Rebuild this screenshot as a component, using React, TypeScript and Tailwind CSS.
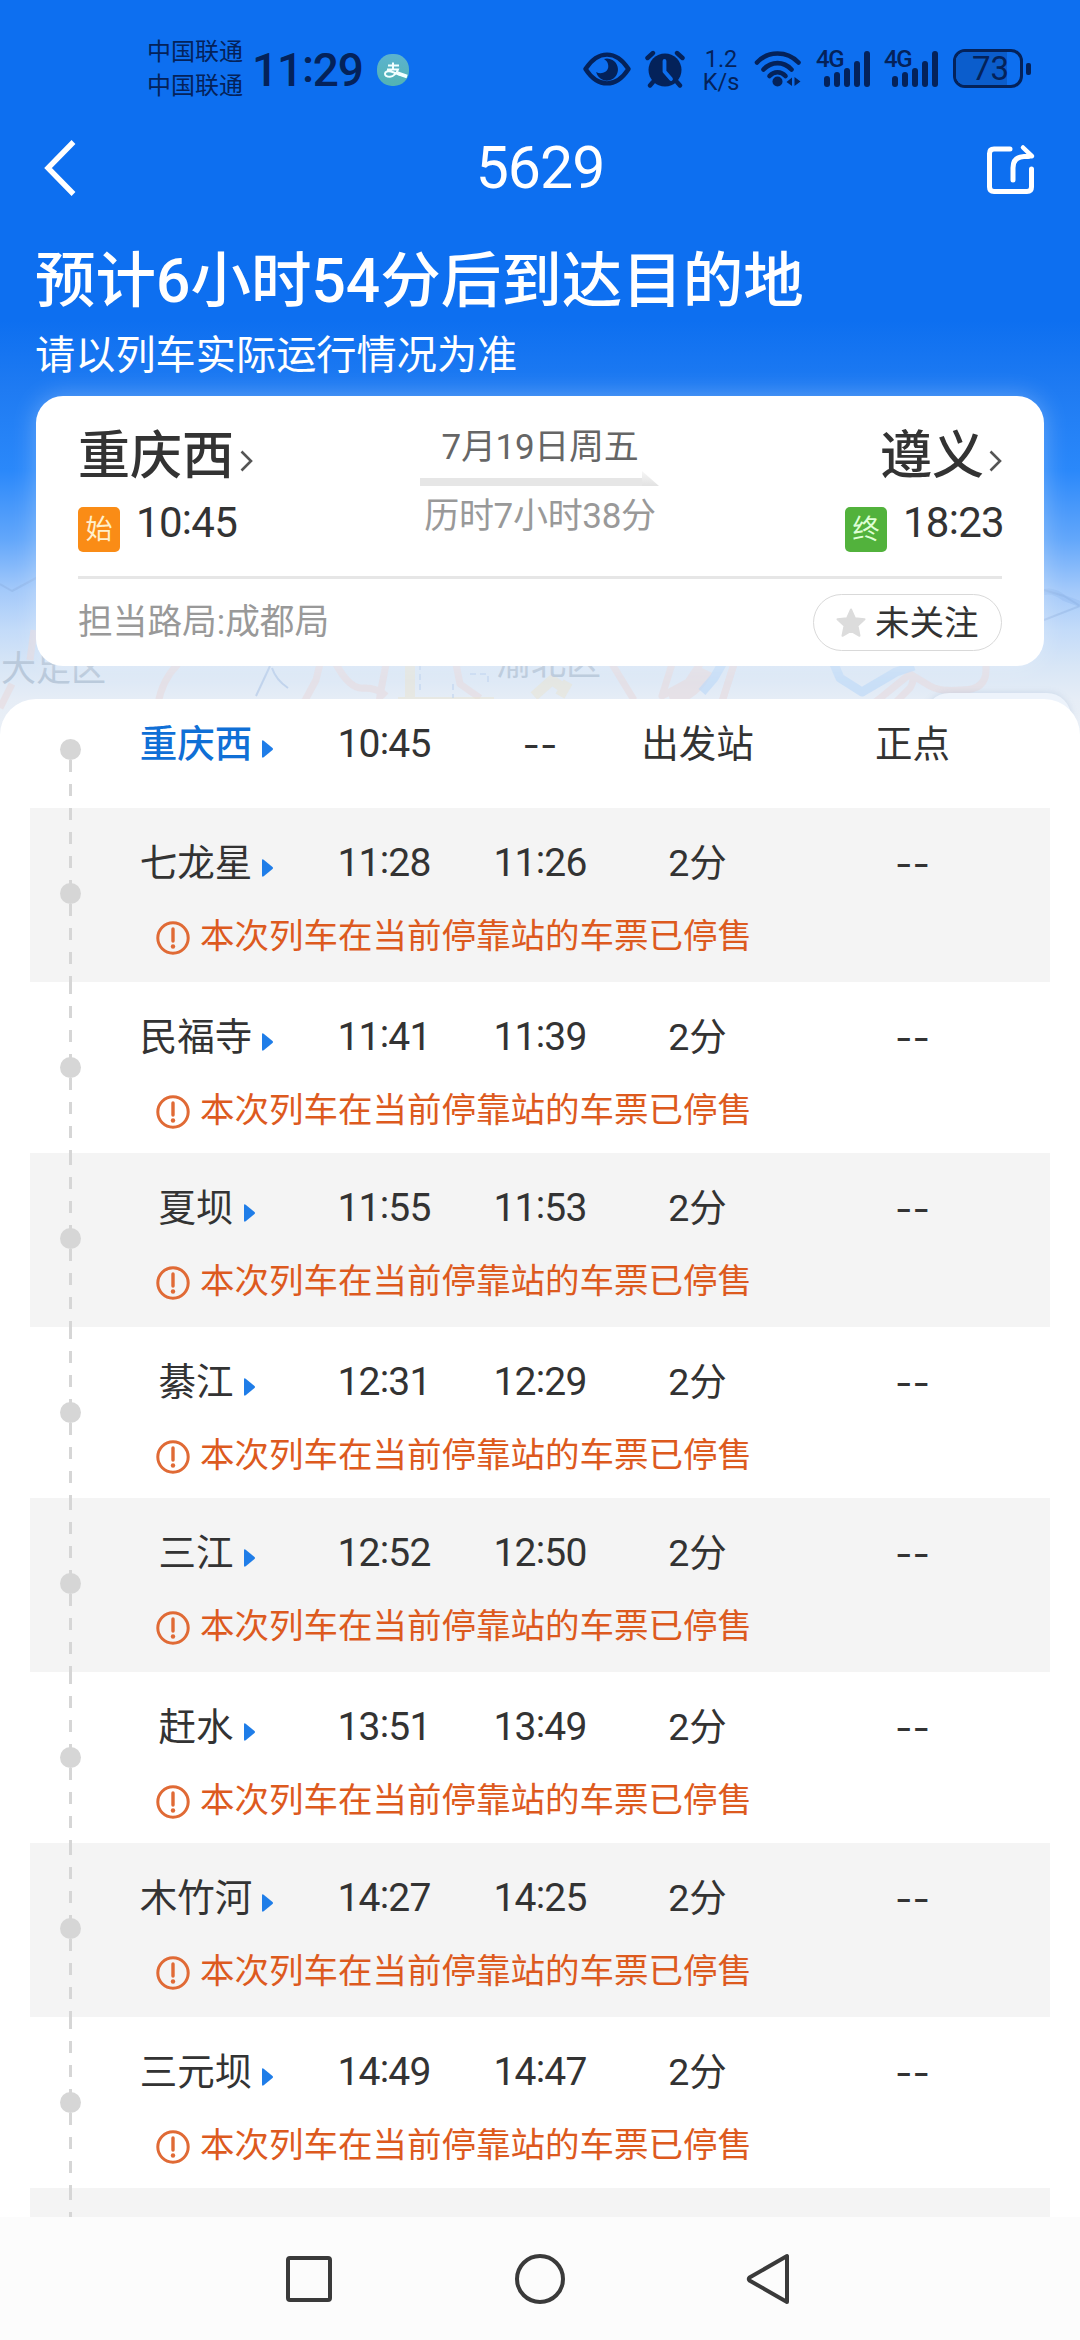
import React from "react";

type Stop = { name: string; depart: string; arrive: string; stay: string; status: string; warn: boolean };

const WARNING = "本次列车在当前停靠站的车票已停售";

const stop = (name: string, depart: string, arrive: string): Stop => ({
  name,
  depart,
  arrive,
  stay: "2分",
  status: "--",
  warn: true,
});

const STOPS: Stop[] = [
  stop("七龙星", "11:28", "11:26"),
  stop("民福寺", "11:41", "11:39"),
  stop("夏坝", "11:55", "11:53"),
  stop("綦江", "12:31", "12:29"),
  stop("三江", "12:52", "12:50"),
  stop("赶水", "13:51", "13:49"),
  stop("木竹河", "14:27", "14:25"),
  stop("三元坝", "14:49", "14:47"),
];

const INK = "#04225a";

/* Clock value with the colon centred on the digits. */
function Time({ value }: { value: string }) {
  const [hours, minutes] = value.split(":");
  return (
    <span>
      {hours}
      <span className="relative -top-[0.08em]">:</span>
      {minutes}
    </span>
  );
}

function SignalIcon() {
  return (
    <div className="relative h-[38px] w-[54px]">
      <span className="absolute -left-[1px] -top-[1px] text-[24px] font-medium leading-[20px] tracking-[-1.500px]">4G</span>
      <svg className="absolute left-0 top-0" width="54" height="38" viewBox="0 0 54 38" fill={INK}>
        <rect x="7" y="26" width="6" height="11" rx="3" />
        <rect x="17" y="22" width="6" height="15" rx="3" />
        <rect x="27" y="18" width="6" height="19" rx="3" />
        <rect x="37" y="11" width="6" height="26" rx="3" />
        <rect x="47" y="1" width="6" height="36" rx="3" />
      </svg>
    </div>
  );
}

function StatusBar() {
  return (
    <div className="flex h-[120px] items-start pl-[147px] text-[#04225a]">
      <div className="mt-[35px] w-[96px] text-[24px] leading-[34px]">
        <div>中国联通</div>
        <div>中国联通</div>
      </div>
      <div className="ml-[9px] mt-[46px] w-[112px] text-[46px] font-medium leading-[48px] tracking-[-1.200px]"><Time value="11:29" /></div>
      <div className="ml-[13px] mt-[54px] flex h-[32px] w-[32px] items-center justify-center overflow-hidden rounded-[15px] bg-gradient-to-b from-[#5cb3cf] to-[#52b3b3]">
        <svg width="32" height="32" viewBox="0 0 32 32" fill="none" stroke="#f2ffff" strokeWidth="2">
          <path d="M11 11.500h11M16 8.500v7M10 15.500h11c-1 3-4 7-8 7.200-3 0-5-1-5-3 0-2.200 3-3 6-2.200 5 1.500 10 4 16 5" />
          <path d="M20 19l10 3.500" strokeWidth="3.500" />
        </svg>
      </div>
      <svg className="ml-[174px] mt-[52px]" width="48" height="34" viewBox="0 0 48 34">
        <path d="M2.500 17C9 7 16 2.600 24 2.600S39 7 45.500 17C39 27 32 31.400 24 31.400S9 27 2.500 17z" fill="none" stroke={INK} strokeWidth="4.400" strokeLinejoin="round" />
        <path d="M21 7a11 11 0 1 1-7.800 13c4 2.500 11 1 12-4.500.6-4-1.500-7-4.200-8.500z" fill={INK} />
      </svg>
      <svg className="ml-[14px] mt-[50px]" width="40" height="38" viewBox="0 0 40 38">
        <circle cx="20" cy="20" r="16.500" fill={INK} />
        <path d="M2.500 8l5.500-5M37.500 8L32 3M8 32l-3 3.500M32 32l3 3.500" stroke={INK} strokeWidth="4.400" strokeLinecap="round" />
        <path d="M19.500 11v10.500l6.500 7.500" fill="none" stroke="#0d6ff0" strokeWidth="3.800" strokeLinecap="round" strokeLinejoin="round" />
      </svg>
      <div className="ml-[17px] mt-[47px] w-[38px] text-center text-[23.500px] leading-[24px]">
        <div>1.2</div>
        <div className="-mt-[1px]">K/s</div>
      </div>
      <svg className="ml-[14px] mt-[50px]" width="48" height="38" viewBox="0 0 48 38" fill="none" stroke={INK} strokeWidth="4.600" strokeLinecap="round">
        <path d="M3 12.500C14 .5 33 .5 44.500 12.500" />
        <path d="M9.500 19.500c8-8.500 20-8.500 28 0" />
        <path d="M15.500 26c4.500-5 11.500-5 16 0" />
        <circle cx="23.500" cy="31.500" r="5" fill={INK} stroke="none" />
        <path d="M38 27.500v8.500l-5.500-4zM40.500 36v-9l6 4.500z" fill={INK} stroke="none" />
      </svg>
      <div className="ml-[15px] mt-[50px] flex gap-[14px]">
        <SignalIcon />
        <SignalIcon />
      </div>
      <div className="relative ml-[14px] mt-[49px] h-[39px] w-[70px] overflow-hidden rounded-[12px] border-[3px] border-[#04225a]">
        <div className="h-full w-[51px] bg-[#0b5dcc]" />
        <span className="absolute inset-0 pl-[5px] text-center text-[33px] leading-[34px]">73</span>
      </div>
      <div className="ml-[3px] mt-[63px] h-[12px] w-[5px] rounded-[2px] bg-[#04225a]" />
    </div>
  );
}

function MapBackdrop() {
  return (
    <svg className="absolute inset-x-0 top-0" width="1080" height="760" viewBox="0 0 1080 760" fill="none" strokeLinejoin="round">
      <g stroke="#e8d9dc" strokeWidth="7" opacity=".55">
        <path d="M178 664q-16 16-20 40M386 664l-5 26-2 12M320 664l-4 16-14 26M336 664q14 26 28 24 14 0 22 8M456 664l4 20 20 14M612 664l22 36M672 664l-10 32 26-14 20-30M734 664l-14 44" />
        <path d="M890 708l20-20q6-10 0-14M868 708l42-34 20 12q10 6 32 4 24 0 24-20v-8M720 708l14-44" />
        <path d="M0 708l12-24M34 630l-4 30" />
        <path d="M670 700q26-8 36-30" strokeWidth="14" />
      </g>
      <g stroke="#bfdaf8" strokeWidth="9" opacity=".7">
        <path d="M834 664l6 14 22 14 34-20 18-6M722 664l-8 14-12 14" />
      </g>
      <g stroke="#e9e3cf" strokeWidth="10" opacity=".5">
        <path d="M398 702h96M410 664v36M534 696l18-16 14 10M560 696l8-14" />
      </g>
      <path d="M420 664v30M470 674h18v12M453 684v14" stroke="#b9d0ee" strokeWidth="2" opacity=".5" strokeDasharray="6 4" />
      <path d="M256 696l14-30M272 668q4 12 16 20M0 584l12 7 26-14M1044 590l20 6 16 10M1044 620l36-14" stroke="#86a9da" strokeWidth="2" opacity=".35" />
      <path d="M1044 592q10-2 20 6l16 6" stroke="#8db4ea" strokeWidth="6" opacity=".35" />
      <g className="fill-[#b9c9db] text-[35px]">
        <text x="1" y="681">大足区</text>
        <text x="496" y="675">渝北区</text>
      </g>
    </svg>
  );
}

function Chevron() {
  return (
    <svg width="13" height="22" viewBox="0 0 13 22" fill="none" stroke="#555" strokeWidth="2.600">
      <path d="M1.500 1.500L11 11 1.500 20.500" />
    </svg>
  );
}

function SummaryCard() {
  return (
    <div className="relative mx-[36px] h-[270px] rounded-[27px] bg-white px-[42px] shadow-[0_0_24px_rgba(255,255,255,0.3)]">
      <div className="flex h-[180px] justify-between">
        <div className="pt-[31px]">
          <div className="flex h-[60px] items-center text-[52px] font-medium leading-[60px] text-[#333]">
            重庆西
            <span className="ml-[6px] mt-[8px]"><Chevron /></span>
          </div>
          <div className="flex">
            <div className="mt-[20px] flex h-[45px] w-[42px] items-center justify-center rounded-[5px] bg-[#fa8c16] text-[27px] leading-[44px] text-[#fff0cc]">始</div>
            <div className="ml-[16px] mt-[12px] text-[42px] leading-[48px] tracking-[-0.700px] text-[#333]"><Time value="10:45" /></div>
          </div>
        </div>
        <div className="absolute left-[384px] top-[31px] w-[240px] text-center text-[35px] leading-[42px]">
          <div className="tracking-[-0.300px] text-[#666]">7月19日周五</div>
          <svg className="mt-[2px]" width="240" height="16" viewBox="0 0 240 16">
            <defs>
              <linearGradient id="head" x1="0" y1="0" x2="0" y2="1">
                <stop offset="0" stopColor="#f6f6f6" />
                <stop offset="1" stopColor="#e2e2e2" />
              </linearGradient>
            </defs>
            <path d="M0 7h224v8H0z" fill="#e6e6e6" />
            <path d="M222 0l17 15h-17z" fill="url(#head)" />
          </svg>
          <div className="mt-[9px] tracking-[-0.300px] text-[#999]">历时7小时38分</div>
        </div>
        <div className="pt-[31px]">
          <div className="flex h-[60px] items-center justify-end text-[52px] font-medium leading-[60px] text-[#333]">
            遵义
            <span className="ml-[5px] mt-[8px]"><Chevron /></span>
          </div>
          <div className="-mr-[2px] flex justify-end">
            <div className="mt-[20px] flex h-[45px] w-[42px] items-center justify-center rounded-[5px] bg-[#52b23c] text-[27px] leading-[44px] text-[#dfffd5]">终</div>
            <div className="ml-[16px] mt-[12px] text-[42px] leading-[48px] tracking-[-0.700px] text-[#333]"><Time value="18:23" /></div>
          </div>
        </div>
      </div>
      <div className="h-[3px] bg-[#e6e6e6]" />
      <div className="flex items-start justify-between">
        <div className="mt-[21px] text-[34.700px] leading-[44px] text-[#999]">担当路局:成都局</div>
        <div className="mt-[15px] flex h-[57px] w-[189px] items-center rounded-full border border-[#d9d9d9] pl-[22px] text-[34.500px] leading-[55px] text-[#333]">
          <svg width="30" height="30" viewBox="0 0 30 30" fill="#dcdcdc" stroke="#dcdcdc" strokeWidth="2" strokeLinejoin="round">
            <path d="M15 1.500l4 8.800 9.500 1-7 6.500 2 10L15 22.800 6.500 27.800l2-10-7-6.500 9.500-1z" />
          </svg>
          <span className="relative top-[1px] ml-[9px]">未关注</span>
        </div>
      </div>
    </div>
  );
}

function CellValue({ value }: { value: string }) {
  if (value === "--") return <span className="font-[Inter] text-[38px]">--</span>;
  return value.includes(":") ? <Time value={value} /> : <>{value}</>;
}

function StopCells({ item, active }: { item: Stop; active?: boolean }) {
  return (
    <div className="ml-[81px] flex h-[50px] text-center text-[37.500px] leading-[50px] text-[#333]">
      <div className={active ? "flex w-[192px] items-center justify-center font-medium text-[#0f6fd6]" : "flex w-[192px] items-center justify-center"}>
        {item.name}
        <svg className="ml-[10px] mt-[9px]" width="12" height="18" viewBox="0 0 12 18" fill="#1f7de8">
          <path d="M0 1.500Q0-.5 2 1l8.500 7q1 1 0 2L2 17Q0 18.500 0 16.500z" />
        </svg>
      </div>
      <div className="w-[162px] text-[39px] tracking-[-0.800px]"><CellValue value={item.depart} /></div>
      <div className={item.arrive === "--" ? "w-[150px]" : "w-[150px] text-[39px] tracking-[-0.800px]"}><CellValue value={item.arrive} /></div>
      <div className="w-[165px]">{item.stay}</div>
      <div className="w-[265px]"><CellValue value={item.status} /></div>
    </div>
  );
}

function StopRow({ item, shaded }: { item: Stop; shaded: boolean }) {
  return (
    <div className={shaded ? "relative mx-[30px] h-[174px] bg-[#f4f4f4] pt-[30px]" : "relative mx-[30px] h-[171px] pt-[30px]"}>
      <div className="absolute inset-y-0 left-[39px] w-[3px] bg-[repeating-linear-gradient(to_bottom,#d6d6d6_0px,#d6d6d6_12px,transparent_12px,transparent_24px)]" />
      <div className="absolute left-[30px] top-[75px] size-[21px] rounded-full bg-[#d6d6d6]" />
      <StopCells item={item} />
      {item.warn && (
        <div className="ml-[126px] mt-[24px] flex h-[48px] items-center text-[34.500px] leading-[48px] text-[#dd5a1e]">
          <svg className="mt-[4px]" width="34" height="34" viewBox="0 0 34 34" fill="none" stroke="#e06a35">
            <circle cx="17" cy="17" r="15.200" strokeWidth="3" />
            <path d="M17 8v12" strokeWidth="3.400" strokeLinecap="round" />
            <circle cx="17" cy="25.500" r="2.200" fill="#e06a35" stroke="none" />
          </svg>
          <span className="ml-[10px] whitespace-nowrap">{WARNING}</span>
        </div>
      )}
    </div>
  );
}

export default function App() {
  return (
    <div className="relative flex h-[2340px] w-[1080px] flex-col overflow-hidden bg-white font-[Roboto,'Noto_Sans_CJK_SC',sans-serif]">
      <div className="relative h-[699px] shrink-0">
        <div className="absolute inset-x-0 top-0 h-[760px] bg-[linear-gradient(to_bottom,#0d6ff0_0px,#0d6ff0_320px,#1f7bf2_390px,#2a88fa_470px,#63a7fa_540px,#a3c9fa_590px,#c3dbf9_630px,#d8e6f6_666px,#e6edf6_700px,#eef2f7_760px)]" />
        <MapBackdrop />
        <div className="relative">
          <StatusBar />
          <div className="flex h-[96px] items-center justify-between pl-[44px] pr-[44px] text-white">
            <svg width="34" height="56" viewBox="0 0 34 56" fill="none" stroke="#fff" strokeWidth="5.400">
              <path d="M29.500 2L4 28l25.500 26" />
            </svg>
            <h1 className="ml-[16px] text-[59px] font-normal leading-[72px] tracking-[-1px]">5629</h1>
            <svg className="mt-[4px]" width="50" height="52" viewBox="0 0 50 52" fill="none" stroke="#fff" strokeWidth="5" strokeLinecap="round">
              <path d="M24 5H8Q3.500 5 3.500 9.500V43Q3.500 47.500 8 47.500H41Q45.500 47.500 45.500 43V25" />
              <path d="M27 36V24Q27 13 38 12.500H42" />
              <path d="M37 3.500l9 8.700h-5" strokeWidth="4.500" strokeLinejoin="round" />
            </svg>
          </div>
          <div className="h-[180px] pl-[35px] text-white">
            <div className="pt-[30px] text-[60.500px] font-medium leading-[72px]">预计6小时54分后到达目的地</div>
            <div className="mt-[13px] text-[40.200px] leading-[50px]">请以列车实际运行情况为准</div>
          </div>
          <SummaryCard />
        </div>
        <div className="absolute left-[925px] top-[693px] h-[60px] w-[146px] rounded-t-[24px] bg-[#edf3fb] shadow-[0_0_6px_rgba(120,150,190,0.25)]" />
      </div>
      <div className="relative min-h-0 flex-1 overflow-hidden rounded-t-[36px] bg-white">
        <div className="relative mx-[30px] h-[109px] pt-[20px]">
          <div className="absolute left-[39px] top-[61px] h-[48px] w-[3px] bg-[repeating-linear-gradient(to_bottom,#d6d6d6_0px,#d6d6d6_12px,transparent_12px,transparent_24px)]" />
          <div className="absolute left-[30px] top-[40px] size-[21px] rounded-full bg-[#d6d6d6]" />
          <StopCells active item={{ name: "重庆西", depart: "10:45", arrive: "--", stay: "出发站", status: "正点", warn: false }} />
        </div>
        {STOPS.map((item, i) => (
          <StopRow key={item.name} item={item} shaded={i % 2 === 0} />
        ))}
        <div className="relative mx-[30px] h-[174px] bg-[#f4f4f4]">
          <div className="absolute inset-y-0 left-[39px] w-[3px] bg-[repeating-linear-gradient(to_bottom,#d6d6d6_0px,#d6d6d6_12px,transparent_12px,transparent_24px)]" />
        </div>
      </div>
      <div className="flex h-[123px] shrink-0 items-start bg-[#fcfcfc] pl-[286px] pt-[37px]">
        <div className="flex h-[50px] items-center">
          <div className="h-[46px] w-[46px] rounded-[4px] border-[4px] border-[#3a3a3a]" />
          <div className="ml-[183px] size-[50px] rounded-full border-[4px] border-[#3a3a3a]" />
          <svg className="ml-[181px]" width="44" height="52" viewBox="0 0 44 52" fill="none" stroke="#3a3a3a" strokeWidth="4" strokeLinejoin="round">
            <path d="M41 3v46L3.500 27.500Q2 26 3.500 24.500z" />
          </svg>
        </div>
      </div>
    </div>
  );
}
